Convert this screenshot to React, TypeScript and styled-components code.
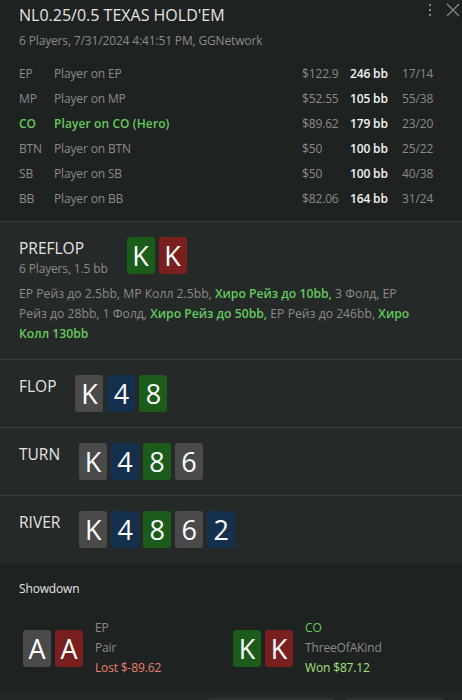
import React from 'react'
import styled, { createGlobalStyle } from 'styled-components'

const GlobalStyle = createGlobalStyle`
  html, body {
    margin: 0;
    padding: 0;
    background: #1e2220;
    font-family: 'Open Sans', 'Noto Sans', sans-serif;
  }
`

const COLORS = {
  bgDark: '#1e2220',
  bgStreet: '#252928',
  border: '#393d3b',
  text: '#e4e4e4',
  muted: '#8b8b8b',
  hero: '#66c95f',
  lost: '#e8806f',
  won: '#a6e27f',
}

const SUIT_BG: Record<string, string> = {
  s: '#4a4a4a',
  h: '#7a1f1f',
  d: '#14304c',
  c: '#1b5c1b',
}

type Suit = 's' | 'h' | 'd' | 'c'
type CardData = { rank: string; suit: Suit }

const players = [
  { pos: 'EP', name: 'Player on EP', stack: '$122.9', bb: '246 bb', stats: '17/14' },
  { pos: 'MP', name: 'Player on MP', stack: '$52.55', bb: '105 bb', stats: '55/38' },
  { pos: 'CO', name: 'Player on CO (Hero)', stack: '$89.62', bb: '179 bb', stats: '23/20', hero: true },
  { pos: 'BTN', name: 'Player on BTN', stack: '$50', bb: '100 bb', stats: '25/22' },
  { pos: 'SB', name: 'Player on SB', stack: '$50', bb: '100 bb', stats: '40/38' },
  { pos: 'BB', name: 'Player on BB', stack: '$82.06', bb: '164 bb', stats: '31/24' },
]

const c = (rank: string, suit: Suit): CardData => ({ rank, suit })

const streets = [
  { name: 'FLOP', cards: [c('K', 's'), c('4', 'd'), c('8', 'c')] },
  { name: 'TURN', cards: [c('K', 's'), c('4', 'd'), c('8', 'c'), c('6', 's')] },
  { name: 'RIVER', cards: [c('K', 's'), c('4', 'd'), c('8', 'c'), c('6', 's'), c('2', 'd')] },
]

const preflopActions = [
  { text: 'EP Рейз до 2.5bb,' },
  { text: 'MP Колл 2.5bb,' },
  { text: 'Хиро Рейз до 10bb,', hero: true },
  { text: '3 Фолд,' },
  { text: 'EP Рейз до 28bb,' },
  { text: '1 Фолд,' },
  { text: 'Хиро Рейз до 50bb,', hero: true },
  { text: 'EP Рейз до 246bb,' },
  { text: 'Хиро Колл 130bb', hero: true },
]

// one span per word, so that no span breaks across lines
const actionWords = preflopActions.flatMap((a) => a.text.split(' ').map((w) => ({ word: w, hero: !!a.hero })))

const showdown = [
  { cards: [c('A', 's'), c('A', 'h')], pos: 'EP', hand: 'Pair', result: 'Lost $-89.62', won: false },
  { cards: [c('K', 'c'), c('K', 'h')], pos: 'CO', hand: 'ThreeOfAKind', result: 'Won $87.12', won: true, hero: true },
]

const Card = ({ card }: { card: CardData }) => <CardBox $suit={card.suit}>{card.rank}</CardBox>

const App = () => {
  return (
    <>
      <GlobalStyle />
      <Page>
        <Header>
          <TitleRow>
            <Title>NL0.25/0.5 TEXAS HOLD'EM</Title>
            <HeaderIcons>
              <svg width="4" height="14" viewBox="0 0 4 14">
                <rect x="1" y="1" width="2" height="2" fill="#8a8a8a" />
                <rect x="1" y="6" width="2" height="2" fill="#8a8a8a" />
                <rect x="1" y="11" width="2" height="2" fill="#8a8a8a" />
              </svg>
              <svg width="14" height="14" viewBox="0 0 14 14">
                <path d="M1 1 L13 13 M13 1 L1 13" stroke="#8a8a8a" strokeWidth="1.2" />
              </svg>
            </HeaderIcons>
          </TitleRow>
          <Subtitle>6 Players, 7/31/2024 4:41:51 PM, GGNetwork</Subtitle>
          <PlayerTable>
            {players.map((p) => (
              <React.Fragment key={p.pos}>
                <PosCell $hero={p.hero}>{p.pos}</PosCell>
                <NameCell $hero={p.hero}>{p.name}</NameCell>
                <StackCell>{p.stack}</StackCell>
                <BbCell>{p.bb}</BbCell>
                <StatsCell>{p.stats}</StatsCell>
              </React.Fragment>
            ))}
          </PlayerTable>
        </Header>

        <Street>
          <StreetHead>
            <StreetLabel>
              <StreetName>PREFLOP</StreetName>
              <StreetInfo>6 Players, 1.5 bb</StreetInfo>
            </StreetLabel>
            <Cards>
              <Card card={c('K', 'c')} />
              <Card card={c('K', 'h')} />
            </Cards>
          </StreetHead>
          <Actions>
            {actionWords.map((w, i) => (
              <React.Fragment key={i}>
                <ActionWord $hero={w.hero}>{w.word}</ActionWord>
                {i < actionWords.length - 1 ? ' ' : null}
              </React.Fragment>
            ))}
          </Actions>
        </Street>

        {streets.map((s) => (
          <Street key={s.name}>
            <StreetHead>
              <StreetLabel>
                <StreetName>{s.name}</StreetName>
              </StreetLabel>
              <Cards>
                {s.cards.map((card, i) => (
                  <Card key={i} card={card} />
                ))}
              </Cards>
            </StreetHead>
          </Street>
        ))}

        <Showdown>
          <ShowdownTitle>Showdown</ShowdownTitle>
          <Hands>
            {showdown.map((h) => (
              <Hand key={h.pos}>
                <Cards>
                  {h.cards.map((card, i) => (
                    <Card key={i} card={card} />
                  ))}
                </Cards>
                <HandInfo>
                  <HandPos $hero={h.hero}>{h.pos}</HandPos>
                  <HandName>{h.hand}</HandName>
                  <HandResult $won={h.won}>{h.result}</HandResult>
                </HandInfo>
              </Hand>
            ))}
          </Hands>
        </Showdown>

        <Footer>
          <FooterButton $width={129} />
          <FooterButton $width={100} />
        </Footer>
      </Page>
    </>
  )
}

const Page = styled.div`
  width: 462px;
  height: 700px;
  background: ${COLORS.bgDark};
  color: ${COLORS.text};
  overflow: hidden;
  font-size: 12px;
  letter-spacing: -0.15px;
`

const Header = styled.div`
  padding: 5px 19px 10px;
  border-bottom: 1px solid ${COLORS.border};
`

const TitleRow = styled.div`
  display: flex;
  justify-content: space-between;
  align-items: flex-start;
`

const Title = styled.h1`
  margin: 0;
  font-size: 16px;
  font-weight: 400;
  line-height: 20px;
  letter-spacing: 0;
  color: ${COLORS.text};
`

const HeaderIcons = styled.div`
  display: flex;
  align-items: center;
  gap: 14px;
  margin-top: -2px;
  margin-right: -17px;
`

const Subtitle = styled.div`
  margin-top: 6px;
  line-height: 20px;
  color: ${COLORS.muted};
`

const PlayerTable = styled.div`
  margin-top: 10px;
  display: grid;
  grid-template-columns: 35px 1fr 48px 52px 41px;
  grid-auto-rows: 25px;
  align-items: center;
`

const PosCell = styled.div<{ $hero?: boolean }>`
  color: ${({ $hero }) => ($hero ? COLORS.hero : COLORS.muted)};
  font-weight: ${({ $hero }) => ($hero ? 600 : 400)};
`

const NameCell = styled.div<{ $hero?: boolean }>`
  color: ${({ $hero }) => ($hero ? COLORS.hero : COLORS.muted)};
  font-weight: ${({ $hero }) => ($hero ? 600 : 400)};
  letter-spacing: ${({ $hero }) => ($hero ? '0.1px' : '-0.15px')};
`

const StackCell = styled.div`
  color: ${COLORS.muted};
`

const BbCell = styled.div`
  color: #f2f2f2;
  font-weight: 600;
`

const StatsCell = styled.div`
  color: ${COLORS.muted};
`

const Street = styled.div`
  background: ${COLORS.bgStreet};
  padding: 15px 19px;
  border-bottom: 1px solid ${COLORS.border};

  &:nth-last-of-type(3) {
    border-bottom: none;
  }
`

const StreetHead = styled.div`
  display: flex;
  align-items: flex-start;
  gap: 19px;
`

const StreetLabel = styled.div`
  display: flex;
  flex-direction: column;
`

const StreetName = styled.div`
  font-size: 15.5px;
  line-height: 22px;
  letter-spacing: 0;
  color: ${COLORS.text};
`

const StreetInfo = styled.div`
  line-height: 20px;
  color: ${COLORS.muted};
`

const Cards = styled.div`
  display: flex;
  gap: 4px;
`

const CardBox = styled.div<{ $suit: Suit }>`
  width: 28px;
  height: 37px;
  border-radius: 3px;
  background: ${({ $suit }) => SUIT_BG[$suit]};
  color: #ffffff;
  font-size: 27px;
  line-height: 37px;
  letter-spacing: 0;
  text-align: center;
`

const Actions = styled.div`
  margin-top: 5px;
  max-width: 400px;
  font-size: 12.2px;
  line-height: 20px;
  letter-spacing: 0;
  color: ${COLORS.muted};
`

const ActionWord = styled.span<{ $hero?: boolean }>`
  color: ${({ $hero }) => ($hero ? COLORS.hero : COLORS.muted)};
  font-weight: ${({ $hero }) => ($hero ? 600 : 400)};
`

const Showdown = styled.div`
  background: ${COLORS.bgDark};
  padding: 16px 19px 12px;
`

const ShowdownTitle = styled.div`
  line-height: 20px;
  font-weight: 500;
  color: ${COLORS.text};
`

const Hands = styled.div`
  margin-top: 19px;
  padding-left: 4px;
  display: grid;
  grid-template-columns: 1fr 1fr;
`

const Hand = styled.div`
  display: flex;
  align-items: center;
  gap: 12px;
`

const HandInfo = styled.div`
  display: flex;
  flex-direction: column;
  line-height: 20px;
`

const HandPos = styled.div<{ $hero?: boolean }>`
  color: ${({ $hero }) => ($hero ? COLORS.hero : COLORS.muted)};
`

const HandName = styled.div`
  color: ${COLORS.muted};
`

const HandResult = styled.div<{ $won?: boolean }>`
  color: ${({ $won }) => ($won ? COLORS.won : COLORS.lost)};
`

const Footer = styled.div`
  background: #232826;
  display: flex;
  justify-content: flex-end;
  gap: 9px;
  padding: 8px 17px 8px;
`

const FooterButton = styled.div<{ $width: number }>`
  width: ${({ $width }) => $width}px;
  height: 30px;
  border-radius: 4px;
  background: #2f3331;
`

export default App
